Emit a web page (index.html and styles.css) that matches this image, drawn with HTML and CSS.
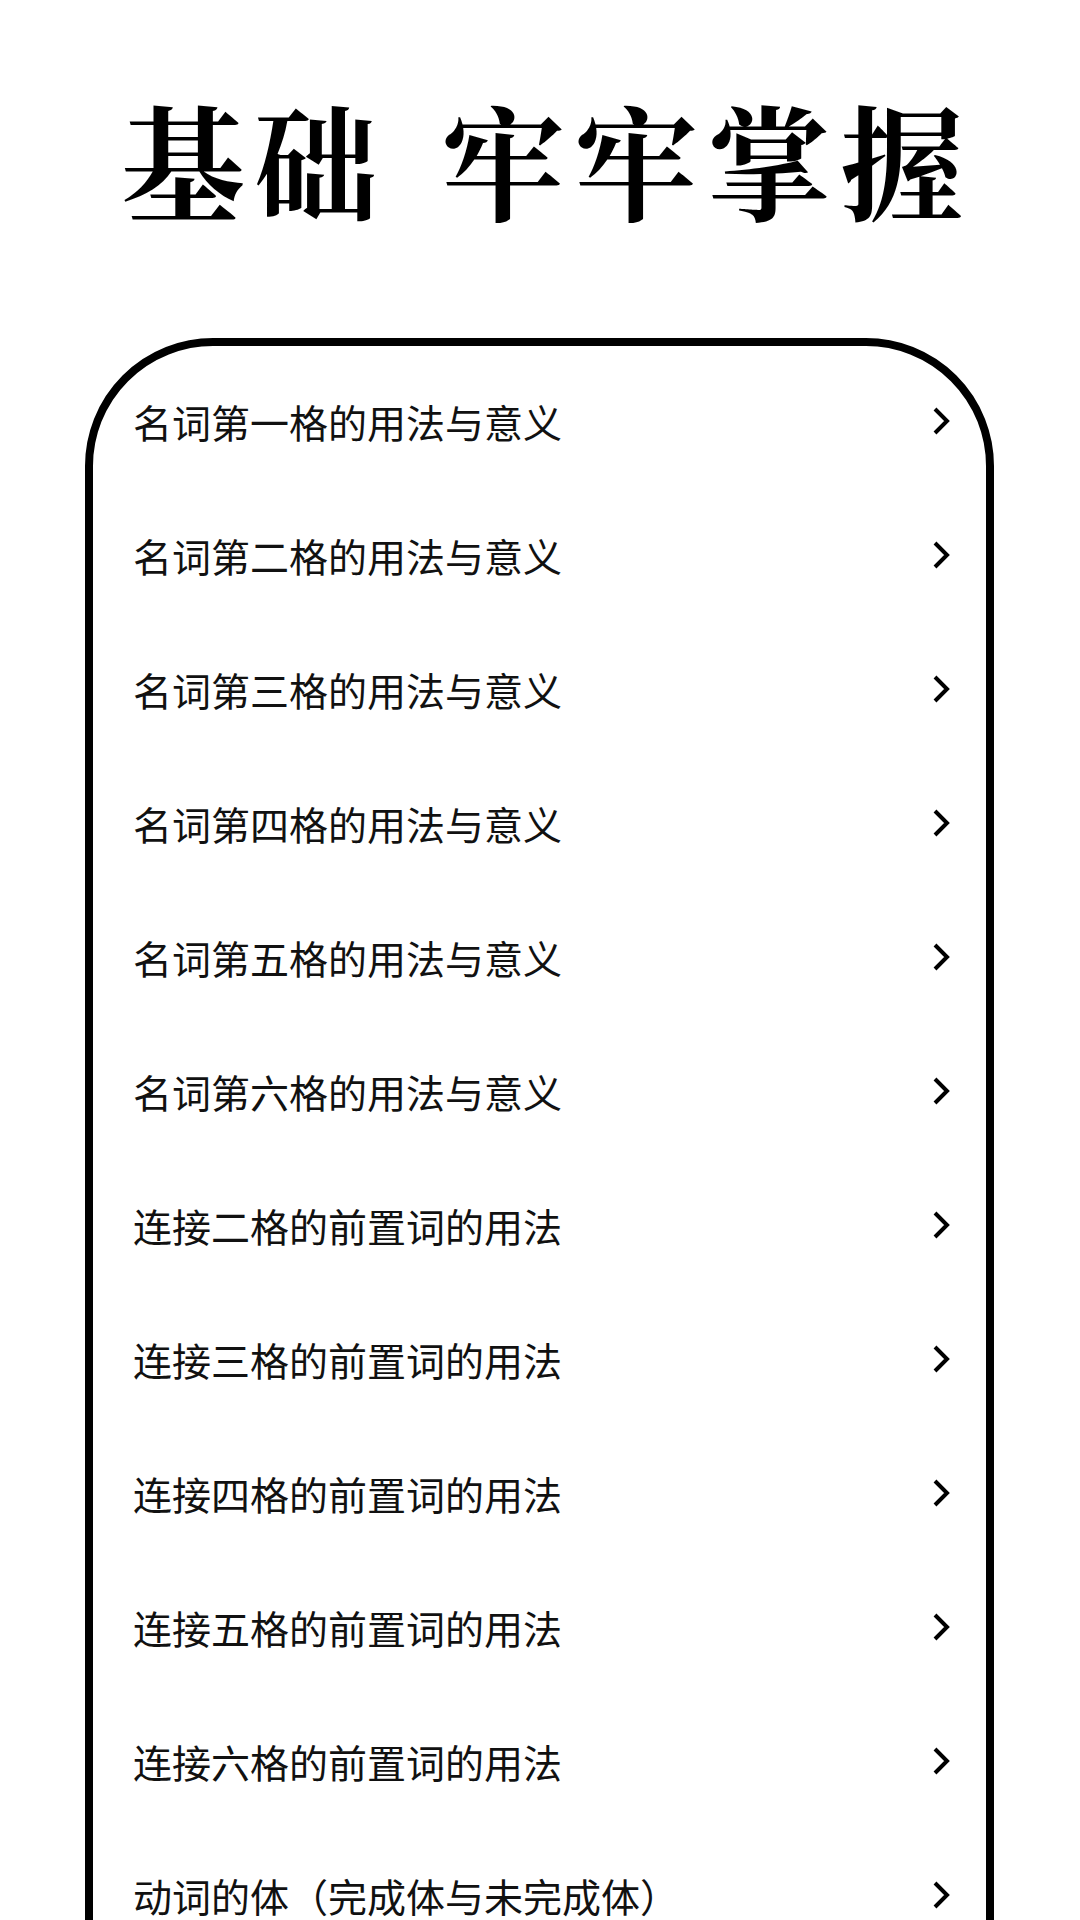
FILE: index.html
```html
<!DOCTYPE html>
<html lang="zh-CN">
<head>
<meta charset="utf-8">
<title>基础 牢牢掌握</title>
<link rel="stylesheet" href="styles.css">
</head>
<body>
<header class="hero">
  <h1 class="hero-title"><span>基础</span><span>牢牢掌握</span></h1>
</header>
<main class="card">
  <ul class="topic-list">
    <li class="topic"><span class="topic-name">名词第一格的用法与意义</span><svg class="chev" viewBox="0 0 18 28"><polyline points="3,2 15,14 3,26"/></svg></li>
    <li class="topic"><span class="topic-name">名词第二格的用法与意义</span><svg class="chev" viewBox="0 0 18 28"><polyline points="3,2 15,14 3,26"/></svg></li>
    <li class="topic"><span class="topic-name">名词第三格的用法与意义</span><svg class="chev" viewBox="0 0 18 28"><polyline points="3,2 15,14 3,26"/></svg></li>
    <li class="topic"><span class="topic-name">名词第四格的用法与意义</span><svg class="chev" viewBox="0 0 18 28"><polyline points="3,2 15,14 3,26"/></svg></li>
    <li class="topic"><span class="topic-name">名词第五格的用法与意义</span><svg class="chev" viewBox="0 0 18 28"><polyline points="3,2 15,14 3,26"/></svg></li>
    <li class="topic"><span class="topic-name">名词第六格的用法与意义</span><svg class="chev" viewBox="0 0 18 28"><polyline points="3,2 15,14 3,26"/></svg></li>
    <li class="topic"><span class="topic-name">连接二格的前置词的用法</span><svg class="chev" viewBox="0 0 18 28"><polyline points="3,2 15,14 3,26"/></svg></li>
    <li class="topic"><span class="topic-name">连接三格的前置词的用法</span><svg class="chev" viewBox="0 0 18 28"><polyline points="3,2 15,14 3,26"/></svg></li>
    <li class="topic"><span class="topic-name">连接四格的前置词的用法</span><svg class="chev" viewBox="0 0 18 28"><polyline points="3,2 15,14 3,26"/></svg></li>
    <li class="topic"><span class="topic-name">连接五格的前置词的用法</span><svg class="chev" viewBox="0 0 18 28"><polyline points="3,2 15,14 3,26"/></svg></li>
    <li class="topic"><span class="topic-name">连接六格的前置词的用法</span><svg class="chev" viewBox="0 0 18 28"><polyline points="3,2 15,14 3,26"/></svg></li>
    <li class="topic"><span class="topic-name">动词的体（完成体与未完成体）</span><svg class="chev" viewBox="0 0 18 28"><polyline points="3,2 15,14 3,26"/></svg></li>
  </ul>
</main>
</body>
</html>
```
FILE: styles.css
```css
html, body {
  margin: 0;
  padding: 0;
  background: #ffffff;
}
body {
  width: 1080px;
  height: 1920px;
  overflow: hidden;
  font-family: "Noto Sans CJK SC", "Noto Sans", sans-serif;
  color: #111111;
}
.hero {
  padding-top: 95px;
  height: 338px;
  box-sizing: border-box;
}
.hero-title {
  margin: 0;
  display: flex;
  justify-content: center;
  gap: 54px;
  font-family: "Noto Serif CJK SC", "Source Han Serif SC", "Noto Sans CJK SC", serif;
  font-weight: 700;
  font-size: 124px;
  line-height: 1;
  letter-spacing: 9px;
  color: #000000;
  padding-left: 14px;
}
.card {
  margin: 0 86px 0 85px;
  border: 8px solid #000000;
  border-radius: 128px;
  padding-top: 8px;
  height: 1800px;
  box-sizing: border-box;
}
.topic-list {
  list-style: none;
  margin: 0;
  padding: 0;
}
.topic {
  height: 134px;
  display: flex;
  align-items: center;
  justify-content: space-between;
  padding: 0 36px 0 40px;
}
.topic-name {
  font-size: 39px;
  line-height: 1;
  color: #111111;
}
.chev {
  width: 18px;
  height: 28px;
  fill: none;
  stroke: #000000;
  stroke-width: 4;
}
```
